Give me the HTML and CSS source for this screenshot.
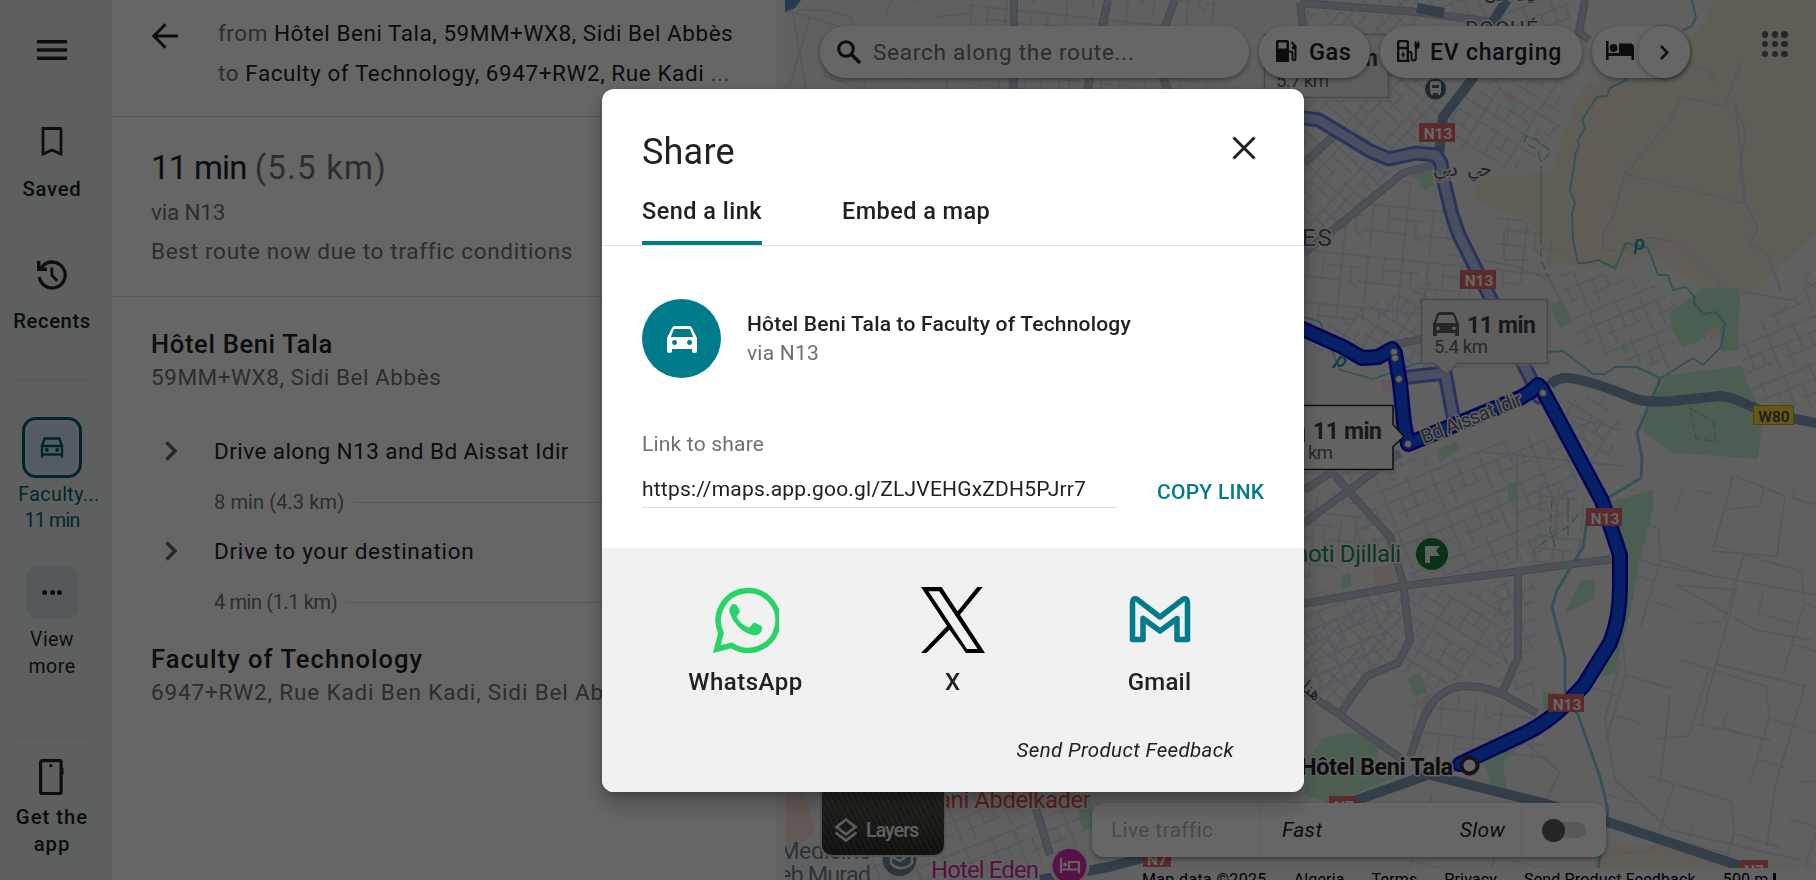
FILE: index.html
```html
<!DOCTYPE html>
<html lang="en">
<head>
<meta charset="utf-8">
<title>Share directions</title>
<link rel="stylesheet" href="styles.css">
</head>
<body>
<nav class="rail">
  <svg class="icon-menu" viewBox="0 0 30 20"><path d="M0 0h30v3.400H0zM0 8.300h30v3.400H0zM0 16.600h30V20H0z"/></svg>
  <svg class="icon-saved" viewBox="0 0 24 30"><path d="M3 1.500h16.500q1.500 0 1.500 1.500v24L12 23l-9 4z" fill="none" stroke="#202124" stroke-width="2.800"/></svg>
  <span class="rail-label t-saved">Saved</span>
  <svg class="icon-recents" viewBox="0 0 30 30"><path d="M2.300 17A13 13 0 1 0 5.500 6.300L3 9" fill="none" stroke="#202124" stroke-width="3.300"/><path d="M0 1h3.400v6.600H10V11H0zM13.500 7.500h2.800v7.300l5 5-2 2-5.800-6z"/></svg>
  <span class="rail-label t-recents">Recents</span>
  <hr class="rail-rule">
  <span class="recent-trip">
    <svg viewBox="0 0 24 21"><path d="M4.500 1.500h15l2.500 7.500v8.500H2V9zM2 9h20M2 20.500V16M22 20.500V16" fill="none" stroke="#00606e" stroke-width="2.400"/><circle cx="6.800" cy="13" r="2"/><circle cx="17.200" cy="13" r="2"/></svg>
  </span>
  <span class="rail-label trip t-facu">Faculty...</span>
  <span class="rail-label trip t-trip">11 min</span>
  <span class="view-more"><i></i><i></i><i></i></span>
  <span class="rail-label t-view">View</span>
  <span class="rail-label t-more">more</span>
  <hr class="rail-rule low">
  <svg class="icon-phone" viewBox="0 0 26 36"><rect x="1.600" y="1.600" width="20.500" height="33" rx="1.500" fill="none" stroke="#202124" stroke-width="3.200"/><circle cx="11.800" cy="6.700" r="1.600"/><path d="M23 9h1.500v7H23z"/></svg>
  <span class="rail-label t-get">Get the</span>
  <span class="rail-label t-app">app</span>
</nav>

<aside class="panel">
  <header class="panel-head">
    <svg class="icon-back" viewBox="0 0 26 26"><path d="M13.500 1.200 1.900 13l11.600 11.800M2 13h24" fill="none" stroke="#202124" stroke-width="3"/></svg>
    <div class="ends">
      <p><span class="t-from"><em>from</em> Hôtel Beni Tala, 59MM+WX8, Sidi Bel Abbès</span></p>
      <p><span class="t-to"><em>to</em> Faculty of Technology, 6947+RW2, Rue Kadi <em>...</em></span></p>
    </div>
  </header>
  <section class="summary">
    <div class="summary-row">
      <h1><span class="t-dur">11 min</span> <em class="t-dist">(5.5 km)</em></h1>
      <svg class="icon-send" viewBox="0 0 26 36"><rect x="1.500" y="1.500" width="23" height="33" rx="1.500" fill="none" stroke="#202124" stroke-width="3"/><path d="M5 18.300h10M10.500 13l5 5.300-5 5.300" fill="none" stroke="#202124" stroke-width="3"/></svg>
    </div>
    <p><span class="t-via">via N13</span></p>
    <p><span class="t-best">Best route now due to traffic conditions</span></p>
  </section>
  <section class="steps">
    <h2><span class="t-hotel">Hôtel Beni Tala</span></h2>
    <p class="addr"><span class="t-haddr">59MM+WX8, Sidi Bel Abbès</span></p>
    <div class="step">
      <svg viewBox="0 0 12 20"><path d="M1.500 1.500 10 10l-8.500 8.500" fill="none" stroke="#5f6368" stroke-width="3.400"/></svg>
      <span class="t-drive">Drive along N13 and Bd Aissat Idir</span>
    </div>
    <div class="leg"><span class="t-leg1">8 min (4.3 km)</span><hr></div>
    <div class="step">
      <svg viewBox="0 0 12 20"><path d="M1.500 1.500 10 10l-8.500 8.500" fill="none" stroke="#5f6368" stroke-width="3.400"/></svg>
      <span class="t-dest">Drive to your destination</span>
    </div>
    <div class="leg"><span class="t-leg2">4 min (1.1 km)</span><hr></div>
    <h2 class="end"><span class="t-fac">Faculty of Technology</span></h2>
    <p class="addr"><span class="t-faddr">6947+RW2, Rue Kadi Ben Kadi, Sidi Bel Abbès</span></p>
  </section>
</aside>

<main class="map">
<svg class="map-canvas" viewBox="785 0 1031 880">
  <defs>
    <pattern id="ga" width="46" height="38" patternUnits="userSpaceOnUse" patternTransform="rotate(32)"><path d="M0 3h46M0 16h30M0 28h46M6 3v25M18 0v16M30 3v35M40 16v12" class="st"/></pattern>
    <pattern id="gb" width="52" height="44" patternUnits="userSpaceOnUse" patternTransform="rotate(-22)"><path d="M0 5h52M0 19h52M14 32h38M5 5v39M19 19v25M33 0v32M45 19v13" class="st"/></pattern>
    <pattern id="gc" width="60" height="52" patternUnits="userSpaceOnUse" patternTransform="rotate(6)"><path d="M0 8h60M22 20h38M0 34h44M8 8v44M24 8v26M42 0v52M52 20v16l8 4" class="st"/></pattern>
    <pattern id="gd" width="34" height="40" patternUnits="userSpaceOnUse" patternTransform="rotate(-48)"><path d="M0 4h34M0 14h34M0 26h20M4 4v36M16 0v26M28 14v26" class="st"/></pattern>
    <pattern id="ge" width="150" height="120" patternUnits="userSpaceOnUse" patternTransform="rotate(17)"><path d="M0 20h90l12 30h48M30 20v70l-30 12M102 50v70M60 72h42M60 72v-20M102 92h30" class="st"/></pattern>
  </defs>
  <rect x="785" width="1031" height="880" fill="#f0f0f2"/>
  <path fill="#f1e9d8" d="M1713 0l-6 20-44 47-73 16-13 14-14 36-10 40-76 4-4 23 60 23 14 40 70 7 33-15 50 32 47 10 69-64V0zM1600 840l120 10-20 30h-110z"/>
  <path fill="#f6ded6" d="M1508 90l9 6-6 9-9-7zM1381 380h16v14l-14-4zM1374 567l17-3 6 18-22 3zM1416 700l18-7-2 20-8 4zM1703 312l20-4 3 20-14 12-8-10zM785 790h20l10 40-30 30z"/>
  <g fill="url(#gd)"><path d="M1304 0h130l10 110-10 44-60-4-70-36zM1304 130l60 20 40 20-100 80z"/><path d="M1330 620l70-40 10 60-70 70-36-20v-60z"/></g>
  <g fill="url(#ga)"><path d="M1450 100l120-30-10 60-40 40-70-20zM1330 320l100-40 30 60-60 30-90-20z"/><path d="M1410 590h100v70l-80 30-30-20zM1555 400l50-5 15 60-35 20z"/></g>
  <g fill="url(#gb)"><path d="M1340 470l70-10 190-40-30 90-30 50-120 20-60-30zM1560 270l90 10 30 30-10 60-90-20zM1735 340l81-60v130l-60-10z"/><path d="M1304 590l95-5-20 80-75 30zM1495 580h40v120l-40-20zM1440 0h130v60l-70 30-50-20zM870 790h230l-20 60-110 30h-100z"/></g>
  <g fill="url(#gc)"><path d="M1304 250l100-70 40 10 40 90-40 40-140 0zM1500 200l50 40 30 30-90 20zM1304 500l40-10 40 60-80 30zM1540 480l50 20-10 60-50 10zM1410 690l120 20 20 50-80-10-60 8zM970 0h245v110H970z"/></g>
  <g fill="url(#ge)"><path d="M1620 560l50-70h146v380h-190l-30-100zM1400 790l150 20v60h-150zM1580 700l40-100 60 20-30 120-40 60zM785 0h185v110H785z"/></g>
  <g class="st line"><path d="M1741 62l-13 36-4 8-42-9-13 25-44 52-12 43-10 16v15l10 3 18-4 10-9 13 0 24 5 22 22 26 24 70 12M1625 174l121 30-11-100 11 30-7 40 7 30 12 24-8 15 18 12 13 36M1688 65l20 4 8 12M1504 230h28M1504 230v30h26M1450 255l60 10 40 15 20 40M1484 452l140 14M1517 452v110M1600 440l20-20M1550 410l70 20M1735 476l50 20-8 60-67-5M1733 476l-20 75M1626 555l30 10 160 30M1737 587l-30 110-6 30M1736 590l-60-5 80 45 56 10M1715 664l90 22-30 100-8 60M1697 724l74 16M1620 660l-15 60 10 60 55 50 130 30M1670 695l-10 90M1505 757l20-15 35 30-22 45M1810 270l-5 10 11 9M792 8l14 82M797 10h30l25 8v12"/></g>
  <g fill="#bdecca"><path d="M1670 312l20-14 10-8h35l5 7-2 53-16 2-4-27-10 5-2 8-23 10-11-18zM1667 375l75-9 5 17 16 32-5 44-85-6-32-23 12-30zM1550 305l12-5 10 23-12 5zM1438 450l18-9 4 7-18 12zM1508 483h9v18h-9zM1608 502l45-12v20l-13 50-7 40-18 72-15 6 14-90zM1304 795l8-40 10-17 23-5 13 0 14 5 8 7-5 20 25 10-30 13-40 15z"/><path d="M1408 678l12-5 7 19-12 5zM1480 760l32-12-9 17 5 28-18-8-3-15zM1565 613l15-33h15v18l-18 10zM1543 692h15l-3 15-12 3zM1411 175l21-5 2 16-7 3zM1078 808h14v22h-10zM1341 575l9-2 2 14-10 1zM1700 288h40l-5 12h-35zM1622 343l8 3-4 8-5-5z"/></g>
  <g class="st line"><path d="M1680 405l3 45 70 5 8-40-65-3zM1702 408l6 40M1740 412v42M1680 440l80 4"/></g>
  <g class="path-green"><path d="M1541 240v-80M1540 160l-2-10-14-8 2-6 10 3 12 10 3 2-7 9M1541 170v90l8 18M1552 500l-2 30 6 20M1568 500v40M1540 545l30-20 8-10M1690 408l6 30 20 4-2-20z"/></g>
  <g class="water"><path d="M1692 0l4 17-5 10-8 3M1628 79l-18 9-3 8-10 1-15 23 3 8-7 12 1 5-4 10-1 12-4 23 5 13-3 10 1 27 5 23 8 0 12-3 17 8 11-25 22 5 10 27h10l5 15 13-3 9 11-1 5 9 11 12-2 10 11-4 24-18 18-10-7-35 22M1548 352l15-1 30 23h12l10-7h22l23 11" stroke-width="2"/><path d="M1660 380l-23 53 5 24-1 21-33 20-21 22-4 27-26 43-5 17 13 50v33l13 25 22 62 8 33-10 58" stroke-width="3"/><path d="M1304 317l16 5 20 48 33 9 60-21" stroke-width="1.500"/></g>
  <g class="road-edge"><path d="M1304 163l33-30M1304 253l39-31 60-49 30-8M1300 3l117 9 76 10M1300 3l5 40M1585 0l-6 32 10 8M1304 490l28-18 13 15 45 50 13 46 7 57-12 23-31 13-30 42M1304 523l96-70M1280 608l123-22 210-27M1518 572v85l-16 36M1410 757l13-37q14-34 44-34 23 0 46 14l24 13M1307 693l30 20 66 47M1392 345l30-6M1014 0v110M1108 0l-24 105M1175 0l-12 31-3 40 15 34M1035 805l15 50"/></g>
  <g class="road-fill"><path d="M1304 163l33-30M1304 253l39-31 60-49 30-8M1300 3l117 9 76 10M1300 3l5 40M1585 0l-6 32 10 8M1304 490l28-18 13 15 45 50 13 46 7 57-12 23-31 13-30 42M1304 523l96-70M1280 608l123-22 210-27M1518 572v85l-16 36M1410 757l13-37q14-34 44-34 23 0 46 14l24 13M1307 693l30 20 66 47M1392 345l30-6M1014 0v110M1108 0l-24 105M1175 0l-12 31-3 40 15 34M1035 805l15 50"/></g>
  <g class="highway"><path d="M1507 0l-12 18-22 60-30 39-4 40M1417 8l27 5" /><path d="M1550 385q6-7 16-7 18 0 67 20 12 5 40 3l47-5 12 2 30 13q30 8 60 13"/><path d="M1040 880l73-14 244-66 73-26 40-12M1430 775l113 28 74 22 150 50"/></g>
  <path d="M785 0h16l-6 8-10 4z" fill="#5f8fc6"/>
  <g class="alt-route"><path class="e" d="M1296 117l23 3 51 31 19 8 27-6 20 2 5 8 2 15 9 37 7 20 31 62 40 80 9 20M1400 378l45-5 9 48"/><path class="f" d="M1296 117l23 3 51 31 19 8 27-6 20 2 5 8 2 15 9 37 7 20 31 62 40 80 9 20M1400 378l45-5 9 48"/></g>
  <g class="route"><path class="e" d="M1296 326l47 21 19 11 16-1 14-8 3 4 5 30 4 40 4 21 112-46 10-6 8-7 4 4 60 112 18 54v32q0 32-10 56l-26 42-17 18q-20 20-43 31l-64 30"/><path class="f" d="M1296 326l47 21 19 11 16-1 14-8 3 4 5 30 4 40 4 21 112-46 10-6 8-7 4 4 60 112 18 54v32q0 32-10 56l-26 42-17 18q-20 20-43 31l-64 30"/></g>
  <g fill="#fff" stroke="#777" stroke-width="1"><circle cx="1394" cy="352" r="3.500"/><circle cx="1395" cy="358" r="3.500"/><circle cx="1399" cy="379" r="3.500"/><circle cx="1408" cy="444" r="3.500"/><circle cx="1543" cy="393" r="3.500"/></g>
  <text class="lbl" x="1424" y="444" font-size="20" textLength="107" transform="rotate(-21.500 1424 444)" fill="#5f6570">Bd Aissat Idir</text>
  <g class="shields"><path fill="#e5696a" d="M1419 123h36v19h-36zM1460 270h36v19h-36zM1586 508h36v18h-36zM1548 694h36v18h-36zM1329 796h28v19h-28zM1143 849h28v18h-28zM1740 860h28v18h-28z"/><path fill="#fbdc38" stroke="#c9a51f" d="M1753.500 405.500h40v19h-40z"/>
    <g fill="#fff" font-size="15.500" font-weight="700" text-anchor="middle"><text x="1438" y="138.500">N13</text><text x="1479" y="285.500">N13</text><text x="1605" y="523.500">N13</text><text x="1567" y="709.500">N13</text><text x="1344" y="812">N7</text><text x="1157" y="864.500">N7</text><text x="1754" y="876">N7</text><text x="1774" y="421.500" fill="#444" font-weight="500">W80</text></g></g>
  <g class="lbl ar"><text x="1433" y="176" font-size="20" textLength="25">دبي</text><text x="1467" y="176" font-size="20" textLength="25">حي</text><text x="1483" y="-2" font-size="21" textLength="68">حي ياسين</text><text x="1300" y="689" font-size="18" transform="rotate(38 1300 689)">هنا</text></g>
  <g class="lbl" fill="#555a60"><text x="1287" y="246" font-size="24" letter-spacing="2">LES</text><text x="1465" y="36" font-size="21" textLength="73">ROCHÉ</text></g>
  <g fill="#22a0ab" font-size="20" font-style="italic" font-weight="500"><text x="1634" y="250">p</text><text x="1334" y="364" transform="rotate(25 1334 364)">p</text></g>
  <g class="lbl" fill="#218a48" font-size="24"><text x="1401" y="561.500" text-anchor="end" textLength="106">noti Djillali</text></g>
  <circle cx="1432" cy="554" r="18.500" fill="#e8e8ea"/><circle cx="1432" cy="554" r="16" fill="#188038"/><path d="M1425 546h15l-4 5 4 5h-10v7h-5z" fill="#f5f5f5"/>
  <circle cx="1435.500" cy="89" r="12" fill="#e8e8ea"/><circle cx="1435.500" cy="89" r="10.500" fill="#4b6478"/><path fill="#f5f5f5" d="M1430 84q0-3 3-3h5q3 0 3 3v9h-1v2h-2v-2h-5v2h-2v-2h-1zM1432 85v3h7v-3z" fill-rule="evenodd"/>
  <g class="lbl" fill="#222"><text x="1300" y="774.500" font-size="23.500" font-weight="700" textLength="153">Hôtel Beni Tala</text></g>
  <circle cx="1469.500" cy="765.500" r="8" fill="#fff" stroke="#333" stroke-width="4"/>
  <text class="lbl" x="938" y="808" font-size="24" textLength="153" fill="#e44b4b">ani Abdelkader</text>
  <text class="lbl" x="931" y="878" font-size="24" textLength="108" fill="#d02fa0">Hotel Eden</text>
  <g class="lbl" fill="#6a7f8e" font-size="23.500"><text x="779" y="859" textLength="92">Medicine</text><text x="871" y="883" text-anchor="end" textLength="92">eb Murad</text></g>
  <circle cx="899.500" cy="859" r="20" fill="#e8e8ea"/><circle cx="899.500" cy="859" r="17" fill="#6c8594"/><path d="M891 856l9 5 12-9v11q-4 5-11 5t-10-5z" fill="none" stroke="#eee" stroke-width="2.500"/>
  <circle cx="1069.500" cy="866" r="20" fill="#e8e8ea"/><circle cx="1069.500" cy="866" r="17" fill="#d62fae"/><path d="M1061 858v15M1061 869.500h18v4M1079 870v-8h-10v7" fill="none" stroke="#f5f5f5" stroke-width="2.200"/><circle cx="1065" cy="864.500" r="2" fill="#f5f5f5"/>
  <g class="tip"><path d="M1266 36h125v65h-125z" opacity=".35" fill="#555" stroke="none"/><path d="M1264.500 34.500h124v63h-124z"/><path d="M1424 302h126v65h-126z" opacity=".35" fill="#555" stroke="none"/><path d="M1421.500 299.500h126v64h-90l-11 11-12-11h-13z"/><path d="M1270 408h125v65h-125z" opacity=".35" fill="#555" stroke="none"/><path class="sel" d="M1270 405.500h123v19l11 12-11 10v23h-123z"/></g>
  <g fill="#3c4043" font-size="23" font-weight="700"><text x="1309" y="66" textLength="69">11 min</text><text x="1467" y="333" textLength="69">11 min</text><text x="1313" y="438.500" textLength="69">11 min</text></g>
  <g fill="#5f6368" font-size="18.500"><text x="1276" y="87" textLength="53">5.7 km</text><text x="1434" y="353" textLength="54">5.4 km</text><text x="1280" y="459" textLength="53">5.5 km</text></g>
  <g fill="#5f6368"><path id="tcar" fill-rule="evenodd" d="M1437 314q1-2 3-2h12q2 0 3 2l4 10v12h-4v-3h-18v3h-4v-12zM1439 315l-3 8h20l-3-8zM1438 326.500a1.800 1.800 0 1 0 .1 0zM1454 326.500a1.800 1.800 0 1 0 .1 0z"/><use href="#tcar" x="-154" y="106"/></g>
</svg>

<div class="map-ui">
  <div class="topbar">
    <div class="search pill">
      <svg viewBox="0 0 24 24"><circle cx="9" cy="9" r="7.300" fill="none" stroke="#202124" stroke-width="3"/><path d="M14 14l9 9" stroke="#202124" stroke-width="3.400"/></svg>
      <span class="t-search">Search along the route...</span>
    </div>
    <div class="pill gas">
      <svg viewBox="0 0 22 22"><path fill-rule="evenodd" d="M0 2q0-2 2-2h9q2 0 2 2v20H0zM2.500 2.500v6h8v-6z"/><path d="M13 11.500h2q1.500 0 1.500 1.500v5.500q0 1.700 1.500 1.700t1.500-1.700V6.500L15.500 2" fill="none" stroke="#202124" stroke-width="2"/><circle cx="18" cy="7.500" r="2.200"/></svg>
      <span class="t-gas">Gas</span>
    </div>
    <div class="pill ev">
      <svg viewBox="0 0 23 22"><path d="M1.200 21V2.200q0-1 1-1h7.600q1 0 1 1V21M0 20.800h12.500M1 8h10" fill="none" stroke="#202124" stroke-width="2.300"/><path d="M7 10.500 3.800 15.500h1.900L5 19l3.500-5H6.400zM17.500 3h5v4l-1.500 2h-2l-1.500-2zM18 1h1.300v3H18zM20.800 1h1.300v3h-1.300z"/><path d="M11 12h2q1.500 0 1.500 1.500v5q0 2 2.200 2t2.200-2V8" fill="none" stroke="#202124" stroke-width="1.900"/></svg>
      <span class="t-ev">EV charging</span>
    </div>
    <div class="pill hotels">
      <svg viewBox="0 0 28 19"><path d="M0 0h2.600v12H13V2.500h11q4 0 4 4V19h-2.600v-4H2.600v4H0z"/><circle cx="7.600" cy="7" r="3.900"/></svg>
      <span class="next"><svg viewBox="0 0 9 15"><path d="M1 1l6.300 6.500L1 14" fill="none" stroke="#202124" stroke-width="2.600"/></svg></span>
    </div>
    <div class="apps"><i></i><i></i><i></i><i></i><i></i><i></i><i></i><i></i><i></i></div>
  </div>
  <div class="bottombar">
    <div class="layers"><svg viewBox="0 0 24 24"><path d="M12 1.500 2.500 9l9.500 7.400L21.500 9zM1.500 14.500 12 22.600l10.500-8.100" fill="none" stroke="#e8eaed" stroke-width="2.600"/></svg><span class="t-layers">Layers</span></div>
    <div class="traffic">
      <span class="live"><b class="t-live">Live traffic</b></span>
      <span class="speeds"><i class="t-fast">Fast</i><i class="t-slow">Slow</i></span>
      <span class="toggle"><i></i></span>
    </div>
  </div>
  <footer class="credits"><span class="t-md">Map data ©2025</span><span class="t-al">Algeria</span><span class="t-te">Terms</span><span class="t-pr">Privacy</span><span class="t-sp">Send Product Feedback</span><span class="t-km">500 m</span><i></i></footer>
</div>
</main>

<div class="scrim">
<div class="dialog">
  <div class="dialog-head">
    <h2><span class="t-share">Share</span></h2>
    <svg viewBox="0 0 24 24"><path d="M1.500 1.500l21 21M22.500 1.500l-21 21" stroke="#202124" stroke-width="3"/></svg>
  </div>
  <div class="tabs"><span class="tab on"><b class="t-send">Send a link</b></span><span class="tab"><b class="t-embed">Embed a map</b></span></div>
  <div class="place">
    <span class="badge"><svg viewBox="0 0 30 27"><path fill-rule="evenodd" d="M5 2q.7-2 3-2h14q2.300 0 3 2l5 10v13q0 2-2 2h-1q-2 0-2-2v-2H5v2q0 2-2 2H2q-2 0-2-2V12zM7 3 3.800 11h22.400L23 3zM7.500 14a2.500 2.500 0 1 0 .1 0zM22.500 14a2.500 2.500 0 1 0 .1 0z"/></svg></span>
    <div><strong class="t-title">Hôtel Beni Tala to Faculty of Technology</strong><br><span class="t-via2">via N13</span></div>
  </div>
  <p class="link-label"><span class="t-lts">Link to share</span></p>
  <div class="link-row"><span class="url"><span class="t-url">https://maps.app.goo.gl/ZLJVEHGxZDH5PJrr7</span></span><span class="copy"><b class="t-copy">COPY LINK</b></span></div>
  <div class="share-foot">
    <div class="targets">
      <div class="target"><svg viewBox="0 0 66 66"><path d="M3.800 62.200 8 46A29.900 29.900 0 1 1 18.500 58.300z" fill="none" stroke="#27d467" stroke-width="5.600"/><path fill="#27d467" d="M22 17.200q-2-.5-3.300.7c-2 2-3 5-1.500 9 4 10 11 17.500 22 21 5 1.200 10-1.500 10-7.500 0-1-.5-1.300-7.500-4.600q-1-.3-1.700.5l-3 3.700q-.8.8-2 .3c-5-2-8.500-5.500-11-10q-.5-1 .3-1.800l2.300-3q.4-.8 0-1.800l-2.700-5.500q-.7-1-1.900-1z"/></svg><b class="t-wa">WhatsApp</b></div>
      <div class="target"><svg class="x-logo" viewBox="0 0 64 66"><path fill-rule="evenodd" d="M39 27.800 61.700 0h-5.400L36.600 24.200 20.500 0H0l26 38.900L0 66h5.400l23.100-23.300L45 66h19zM7.500 4.200h10.700L56.600 62H45.900z"/></svg><b class="t-x">X</b></div>
      <div class="target"><svg viewBox="0 0 66 66"><path d="M5.500 52.500V15.500q0-4.800 4-3.600L33 30l23.500-18.100q4-1.200 4 3.600v37H50V31.500L33 44 16 31.500v21z" fill="none" stroke="#007b8b" stroke-width="5.500" stroke-linejoin="round"/></svg><b class="t-gm">Gmail</b></div>
    </div>
    <p class="feedback"><i class="t-fb">Send Product Feedback</i></p>
  </div>
</div>
</div>
</body>
</html>
```
FILE: styles.css
```css
* { box-sizing: border-box; }
body { margin: 0; height: 880px; display: flex; overflow: hidden; font-family: Roboto, "Liberation Sans", sans-serif; color: #202124; background: #fff; }
h1, h2, p { margin: 0; font-weight: 400; }
svg { display: block; fill: #202124; flex: none; }
[class*="t-"] { white-space: nowrap; }
hr { border: 0; margin: 0; }

/* Navigation rail */
.rail { width: 112px; padding: 40px 8px 0 0; background: #e9f0ee; display: flex; flex-direction: column; align-items: center; flex: none; }
.icon-menu { width: 30px; height: 20px; }
.icon-saved { width: 24px; height: 30px; margin-top: 67px; }
.icon-recents { width: 30px; height: 30px; margin-top: 58px; }
.rail-label { font-size: 20.300px; line-height: 26px; font-weight: 500; white-space: nowrap; }
.rail-label.trip { color: #00606e; font-weight: 400; font-size: 19.500px; }
.t-saved { margin-top: 19px; letter-spacing: .74px; }
.t-recents { margin-top: 18px; letter-spacing: .55px; }
.rail-rule { width: 73px; height: 1px; background: #d5dbd9; margin-top: 46px; }
.recent-trip { width: 60px; height: 61px; margin-top: 36px; border: 3px solid #00606e; border-radius: 14px; background: #d0e9f2; box-shadow: inset 0 0 0 3px #e1ebee; display: flex; align-items: center; justify-content: center; }
.recent-trip svg { width: 24px; height: 21px; fill: #00606e; }
.t-facu { margin: 4px -8px 0 6px; letter-spacing: .45px; }
.t-trip { letter-spacing: -.7px; }
.view-more { width: 53px; height: 53px; margin-top: 32px; border-radius: 12px; background: #d1e0e3; display: flex; align-items: center; justify-content: center; gap: 2.500px; }
.view-more i { width: 5px; height: 5px; border-radius: 50%; background: #001f25; }
.rail .t-view { margin-top: 8px; font-weight: 400; font-size: 19.500px; letter-spacing: .4px; }
.rail .t-more { margin-top: 1px; font-weight: 400; font-size: 19.500px; letter-spacing: .55px; }
.rail-rule.low { margin-top: 57px; }
.icon-phone { width: 26px; height: 36px; margin-top: 21px; }
.t-get { margin-top: 9px; letter-spacing: 1px; }
.t-app { margin-top: 1px; letter-spacing: .9px; }

/* Directions panel */
.panel { width: 673px; border-right: 8px solid #f4f4f4; flex: none; overflow: hidden; }
.panel em { font-style: normal; color: #6c7075; }
.panel-head { height: 117px; border-bottom: 1px solid #dadce0; padding: 13px 0 0 40px; display: flex; gap: 40px; font-size: 22.500px; line-height: 40px; }
.icon-back { width: 26px; height: 26px; margin-top: 10px; }
.t-from { letter-spacing: .53px; }
.t-to { letter-spacing: .57px; }
.summary { height: 180px; border-bottom: 1px solid #dadce0; padding: 26px 0 0 39px; font-size: 22.500px; line-height: 39px; color: #6c7075; }
.summary-row { display: flex; justify-content: space-between; padding-right: 140px; margin-right: 13px; height: 50px; }
.summary h1 { font-size: 33px; line-height: 50px; color: #202124; white-space: nowrap; }
.t-dur { letter-spacing: -.8px; }
.t-dist { letter-spacing: 1.200px; }
.t-via { letter-spacing: -.2px; }
.t-best { letter-spacing: .7px; }
.icon-send { width: 26px; height: 36px; margin: 3px -14px 0 0; }
.steps { padding: 28px 0 0 39px; font-size: 22.500px; line-height: 40px; }
.steps h2 { font-size: 25.500px; line-height: 38px; font-weight: 500; }
.t-hotel { letter-spacing: .68px; }
.t-haddr { letter-spacing: .55px; }
.addr { color: #6c7075; line-height: 28px; }
.step { display: flex; align-items: center; gap: 37px; padding-left: 14px; margin-top: 40px; height: 40px; }
.t-drive { letter-spacing: .44px; }
.t-dest { letter-spacing: .72px; }
.step svg { width: 12px; height: 20px; }
.leg { display: flex; align-items: center; gap: 10px; padding-left: 63px; height: 40px; margin-top: 11px; color: #6c7075; font-size: 20px; }
.t-leg1 { letter-spacing: .1px; }
.t-leg2 { letter-spacing: -.4px; }
.leg hr { flex: 1; height: 1px; background: #dadce0; }
.leg + .step { margin-top: 9px; }
.steps h2.end { margin-top: 18px; }
.t-fac { letter-spacing: 1.050px; }
.t-faddr { letter-spacing: .85px; }

/* Map drawing */
.map { flex: 1; position: relative; overflow: hidden; }
.map-canvas { width: 1031px; height: 880px; }
.st { fill: none; stroke: #d1d9e6; stroke-width: 1.500; }
.line path { fill: none; stroke: #d1d9e6; stroke-width: 1.700; }
.path-green path { fill: none; stroke: #88c9a5; stroke-width: 1.200; stroke-dasharray: 9 4; }
.water path { fill: none; stroke: #7fcddd; stroke-linejoin: round; }
.road-edge path { fill: none; stroke: #a9b4c6; stroke-width: 8; stroke-linejoin: round; }
.road-fill path { fill: none; stroke: #c0cad9; stroke-width: 6; stroke-linejoin: round; }
.highway path { fill: none; stroke: #819bb8; stroke-width: 10; stroke-linejoin: round; }
.alt-route path, .route path { fill: none; stroke-linejoin: round; stroke-linecap: round; }
.alt-route .e { stroke: #6b80e6; stroke-width: 15; }
.alt-route .f { stroke: #b7c6f2; stroke-width: 9; }
.route .e { stroke: #0a08dd; stroke-width: 16; }
.route .f { stroke: #0f53ff; stroke-width: 11; }
.lbl { paint-order: stroke; stroke: #f4f4f6; stroke-width: 3; stroke-linejoin: round; }
.ar { font-family: "DejaVu Sans", sans-serif; fill: #555a60; }
.tip path { fill: #ececec; stroke: #b4b4b4; stroke-width: 1.500; }
.tip path.sel { fill: #f8f8f8; stroke: #222; }

/* Map controls */
.map-ui { position: absolute; inset: 0; display: flex; flex-direction: column; }
.topbar { display: flex; gap: 10px; padding: 26px 28px 0 35px; }
.pill { height: 52px; border-radius: 26px; background: #fff; box-shadow: 0 2px 5px rgba(0,0,0,.4); display: flex; align-items: center; font-size: 22.500px; font-weight: 500; }
.search { width: 429px; padding-left: 17px; gap: 12px; font-weight: 400; color: #6c7075; }
.search svg { width: 24px; height: 24px; }
.t-search { letter-spacing: .75px; }
.gas { width: 111px; padding-left: 17px; gap: 11px; }
.gas svg { width: 22px; height: 22px; margin-top: -2px; }
.t-gas { font-size: 23.500px; letter-spacing: .5px; }
.ev { width: 202px; padding-left: 17px; gap: 10px; }
.ev svg { width: 23px; height: 22px; margin-top: -2px; }
.t-ev { font-size: 23px; letter-spacing: .8px; }
.hotels { width: 98px; padding-left: 14px; justify-content: space-between; }
.hotels > svg { width: 28px; height: 19px; margin-top: -3px; }
.next { width: 52px; height: 52px; border-radius: 50%; background: #fff; box-shadow: 0 1px 5px rgba(0,0,0,.4); display: flex; align-items: center; justify-content: center; }
.next svg { width: 9px; height: 15px; }
.apps { margin: 5px 0 0 auto; display: grid; grid-template-columns: repeat(3, 6.600px); gap: 3.300px; align-content: start; }
.apps i { width: 6.600px; height: 6.600px; border-radius: 50%; background: #5f6368; }
.bottombar { margin-top: auto; display: flex; align-items: flex-end; gap: 146px; padding: 0 0 11px 35px; }
.layers { width: 126px; height: 126px; border: 2.500px solid #d4d4d4; border-radius: 12px; background: repeating-linear-gradient(63deg, rgba(20,24,20,.25) 0 2px, rgba(110,100,85,.12) 2px 5px), linear-gradient(#6b6a60, #54564c 60%, #2b2c28); color: #f1f3f4; display: flex; align-items: flex-end; gap: 8px; padding: 0 0 13px 12px; font-size: 19.500px; line-height: 22px; font-weight: 500; }
.layers svg { width: 24px; height: 24px; }
.t-layers { letter-spacing: -.9px; }
.traffic { width: 514px; height: 54px; border-radius: 12px; background: #fff; box-shadow: 0 2px 5px rgba(0,0,0,.4); display: flex; align-items: stretch; line-height: 54px; font-size: 21px; }
.traffic b { font-weight: 400; color: #b4b6b8; }
.t-live, .t-fast, .t-slow { letter-spacing: .3px; }
.live { width: 169px; padding-left: 19px; border-right: 1px solid #eee; }
.speeds { width: 261px; padding: 0 16px 0 21px; display: flex; justify-content: space-between; border-right: 1px solid #eee; }
.toggle { width: 40px; height: 16px; margin: 19px 0 0 24px; border-radius: 8px; background: #dcdcdc; display: flex; align-items: center; }
.toggle i { width: 23px; height: 23px; margin-left: -4px; flex: none; border-radius: 50%; background: #5c5c5c; }
.credits { height: 12px; margin-left: 350px; padding: 2px 0 0 7px; overflow: hidden; background: #f5f5f6; color: #000; display: flex; gap: 27px; font-size: 16px; line-height: 20px; letter-spacing: .15px; white-space: nowrap; }
.t-md { letter-spacing: .35px; }
.credits i { width: 3px; height: 10px; margin: 3px 0 0 -23px; background: #000; }

/* Share dialog */
.scrim { position: fixed; inset: 0; background: rgba(0,0,0,.6); display: flex; justify-content: center; align-items: flex-start; padding: 89px 0 0 90px; }
.dialog { width: 702px; height: 703px; border-radius: 12px; background: #fff; box-shadow: 0 12px 22px rgba(0,0,0,.25), 0 2px 8px rgba(0,0,0,.2); overflow: hidden; display: flex; flex-direction: column; }
.dialog-head { height: 98px; padding: 38px 48px 0 40px; display: flex; justify-content: space-between; }
.dialog-head h2 { font-size: 36px; line-height: 50px; }
.t-share { letter-spacing: .2px; }
.dialog-head svg { width: 24px; height: 24px; margin-top: 9px; }
.tabs { height: 59px; padding-left: 40px; border-bottom: 1px solid #dfe1e5; display: flex; gap: 80px; font-size: 23.500px; line-height: 48px; }
.tabs b, .target b { font-weight: 500; }
.t-send { letter-spacing: .47px; }
.t-embed { letter-spacing: .43px; }
.tab { height: 58px; }
.tab.on { border-bottom: 4px solid #007b8b; }
.place { padding: 53px 0 0 40px; display: flex; gap: 26px; font-size: 21px; line-height: 29px; color: #6c7075; }
.place > div { padding-top: 11px; }
.place strong { font-weight: 500; color: #202124; }
.t-title { letter-spacing: .19px; }
.t-via2, .t-lts { letter-spacing: .2px; }
.t-url { letter-spacing: .2px; }
.badge { width: 79px; height: 79px; border-radius: 50%; background: #007b8b; display: flex; align-items: center; justify-content: center; flex: none; }
.badge svg { width: 30px; height: 27px; fill: #fff; margin-top: 2px; }
.link-label { padding: 51px 0 0 40px; font-size: 21px; line-height: 30px; color: #6c7075; }
.link-row { padding: 13px 0 0 40px; display: flex; gap: 40px; font-size: 21px; line-height: 34px; }
.url { width: 475px; height: 36px; border-bottom: 1px solid #dadce0; }
.copy { padding-top: 3px; color: #007b8b; }
.copy b { font-weight: 500; letter-spacing: .25px; }
.share-foot { margin-top: auto; height: 244px; background: #f1f1f1; padding: 39px 0 0 40px; }
.targets { display: flex; }
.target { width: 207px; display: flex; flex-direction: column; align-items: center; font-size: 24px; line-height: 30px; }
.target svg { height: 66px; margin-bottom: 14px; }
.target .x-logo { fill: #000; }
.t-wa { letter-spacing: .5px; }
.t-gm { letter-spacing: .2px; }
.feedback { padding: 38px 70px 0 0; text-align: right; font-size: 20.500px; line-height: 30px; }
.t-fb { letter-spacing: .37px; }
```
